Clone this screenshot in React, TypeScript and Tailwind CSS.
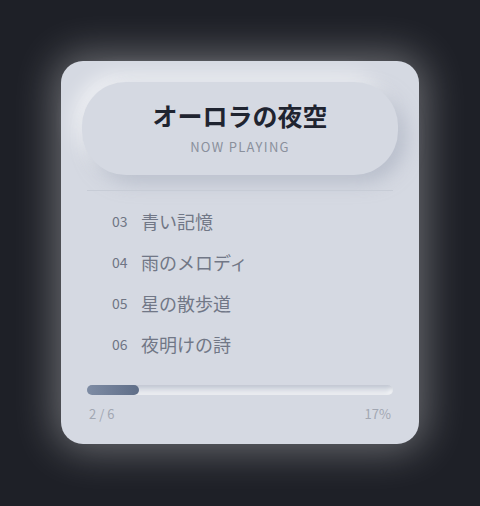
import React from 'react';

const tracks = [
  { no: '03', title: '青い記憶' },
  { no: '04', title: '雨のメロディ' },
  { no: '05', title: '星の散歩道' },
  { no: '06', title: '夜明けの詩' },
];

const App: React.FC = () => {
  const progress = 17;

  return (
    <div
      className="w-[480px] h-[506px] bg-[#1e2027] flex items-start justify-center pt-[61px]"
      style={{ fontFamily: '"Noto Sans CJK JP", "Noto Sans", sans-serif' }}
    >
      {/* Card */}
      <div className="w-[358px] h-[383px] rounded-[22px] bg-[#d5d9e2] p-[21px] flex flex-col shadow-[0_0_40px_6px_rgba(255,255,255,0.35)]">
        {/* Header pill */}
        <div className="h-[93px] rounded-[44px] bg-[#d5d9e2] flex flex-col items-center justify-center shadow-[8px_8px_18px_rgba(163,170,186,0.55),-8px_-8px_18px_rgba(255,255,255,0.6)]">
          <h1 className="text-[25px] leading-[32px] font-bold text-[#1f2430] mt-[-1px]">オーロラの夜空</h1>
          <p className="text-[13px] leading-[18px] tracking-[0.1em] text-[#8a909c] mt-[7px]">NOW PLAYING</p>
        </div>

        {/* Divider */}
        <div className="mx-[5px] mt-[15px] h-px bg-[#c7ccd6]" />

        {/* Track list */}
        <ul className="mt-[10px] flex flex-col">
          {tracks.map((t) => (
            <li key={t.no} className="h-[41px] flex items-center pl-[30px]">
              <span className="w-[29px] text-[14px] text-[#6f7584]">{t.no}</span>
              <span className="text-[18px] text-[#717786]">{t.title}</span>
            </li>
          ))}
        </ul>

        {/* Progress */}
        <div className="mx-[5px] mt-[20px] h-[10px] rounded-full bg-[#dde1e8] shadow-[inset_2px_2px_4px_rgba(163,170,186,0.6),inset_-2px_-2px_4px_rgba(255,255,255,0.7)]">
          <div
            className="h-full rounded-full bg-gradient-to-r from-[#7e8ca4] to-[#5f6e88]"
            style={{ width: `${progress}%` }}
          />
        </div>
        <div className="mx-[5px] mt-[9px] flex justify-between px-[2px] text-[13px] text-[#a2a7b2]">
          <span>2 / 6</span>
          <span>{progress}%</span>
        </div>
      </div>
    </div>
  );
};

export default App;
